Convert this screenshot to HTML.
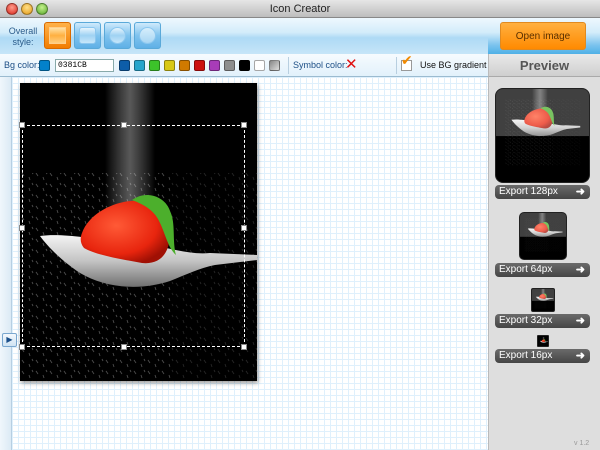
<!DOCTYPE html>
<html><head><meta charset="utf-8"><style>
*{margin:0;padding:0;box-sizing:border-box}
body{width:600px;height:450px;overflow:hidden;font-family:"Liberation Sans",sans-serif;background:#fff;position:relative}
.a{position:absolute}
#title{left:0;top:0;width:600px;height:18px;background:linear-gradient(#e6e6e6,#bdbdbd);border-bottom:1px solid #888;text-align:center;font-size:11px;line-height:18px;color:#222}
.tl{top:3px;width:12px;height:12px;border-radius:50%;border:1px solid rgba(0,0,0,.35)}
#tb{left:0;top:18px;width:600px;height:36px;background:linear-gradient(#eef8fe,#d3ecfa 40%,#aedaf5 55%,#c6e5f8)}
#tbr{left:488px;top:18px;width:112px;height:36px;background:linear-gradient(#eef8fe,#d3ecfa 40%,#7cc3ee 75%,#4fb0e6)}
.sb{top:22px;width:27px;height:27px;border-radius:3px;border:1px solid #5aa9d9;background:linear-gradient(#cfeafc,#7fc3ee 50%,#5fb0e6)}
.sb i{position:absolute;left:4px;top:4px;width:17px;height:17px;background:linear-gradient(#e7f5fd,#9fd2f3 50%,#c7e7fa);border:1px solid #8cc7ef}
#row{left:0;top:54px;width:488px;height:23px;background:linear-gradient(#f6fbfe,#e2f1fb);border-bottom:1px solid #9bbbd0;font-size:9px;color:#1d4f86}
.sw{top:6px;width:11px;height:11px;border-radius:2px;border:1px solid rgba(0,0,0,.35)}
#prevh{left:488px;top:54px;width:112px;height:23px;background:linear-gradient(#e9e9e9,#cfcfcf);border-bottom:1px solid #aaa;border-left:1px solid #bbb;text-align:center;font:bold 13px/23px "Liberation Sans",sans-serif;color:#555}
#grid{left:0;top:77px;width:488px;height:373px;background-color:#fff;background-image:linear-gradient(#dff0fc 1px,transparent 1px),linear-gradient(90deg,#dff0fc 1px,transparent 1px);background-size:6px 6px}
#rp{left:488px;top:77px;width:112px;height:373px;background:#dedede;border-left:1px solid #bbb}
.ex{left:495px;width:95px;height:14px;border-radius:4px;background:linear-gradient(#6a6a6a,#454545);color:#fff;font-size:10px;line-height:14px;padding-left:4px}
.ex b{position:absolute;right:5px;top:0;font-size:11px}
.pv{background:#000;border-radius:5px;overflow:hidden;border:1px solid #222}
.h{width:6px;height:6px;background:#fff;border:1px solid #888}
</style></head><body>
<svg width="0" height="0" style="position:absolute">
<defs>
<radialGradient id="sb" cx="40%" cy="40%" r="65%"><stop offset="0" stop-color="#ff5a36"/><stop offset=".7" stop-color="#e8250e"/><stop offset="1" stop-color="#a01004"/></radialGradient>
<linearGradient id="sp" x1="0" y1="0" x2="0" y2="1"><stop offset="0" stop-color="#f4f4f4"/><stop offset=".5" stop-color="#c4c4c4"/><stop offset="1" stop-color="#707070"/></linearGradient>
<linearGradient id="st" x1="0" y1="0" x2="1" y2="0"><stop offset="0" stop-color="#fff" stop-opacity="0"/><stop offset=".5" stop-color="#ddd" stop-opacity=".4"/><stop offset="1" stop-color="#fff" stop-opacity="0"/></linearGradient>
<pattern id="dots" width="14" height="11" patternUnits="userSpaceOnUse"><path d="M2 2l2 3M9 6l1 3M12 1l1 2" stroke="#ddd" stroke-width=".9"/></pattern>
<symbol id="photo" viewBox="0 0 237 298">
<rect width="237" height="298" fill="#000"/>
<rect x="85" y="0" width="50" height="160" fill="url(#st)"/>
<rect x="0" y="90" width="237" height="208" fill="url(#dots)" opacity=".35"/>
<rect x="150" y="90" width="87" height="208" fill="#000" opacity=".5"/>
<path d="M20 153 C40 150 70 155 90 158 L130 162 C150 165 170 172 190 170 L237 172 L237 177 L195 182 C180 185 165 192 150 198 C120 208 85 205 60 190 C42 178 28 164 20 153Z" fill="url(#sp)"/>
<path d="M62 150 C70 128 100 115 125 118 C140 122 150 132 150 150 C150 168 142 182 122 180 C100 176 76 172 64 165 C60 160 60 155 62 150Z" fill="url(#sb)"/>
<path d="M112 117 C128 106 146 115 150 128 C156 140 152 158 156 172 C148 165 145 150 140 140 C135 128 125 122 112 117Z" fill="#4caf2c"/>
</symbol>
</defs></svg>

<div id="title" class="a">Icon Creator</div>
<div class="a tl" style="left:6px;background:radial-gradient(circle at 50% 35%,#ff9c8c,#d8261a)"></div>
<div class="a tl" style="left:21px;background:radial-gradient(circle at 50% 35%,#ffe08a,#e59a14)"></div>
<div class="a tl" style="left:36px;background:radial-gradient(circle at 50% 35%,#c5f28c,#57a82a)"></div>

<div id="tb" class="a"></div>
<div id="tbr" class="a"></div>
<div class="a" style="left:6px;top:26px;width:34px;text-align:center;font-size:9px;line-height:11px;color:#2a5b8a">Overall style:</div>
<div class="a sb" style="left:44px;border-color:#d86a00;background:linear-gradient(#ffb24a,#f27d00)"><i style="background:linear-gradient(#ffe1a6,#ffb040 50%,#ffcf80);border-color:#ffcf8a"></i></div>
<div class="a sb" style="left:74px"><i style="border-radius:3px"></i></div>
<div class="a sb" style="left:104px"><i style="border-radius:50%"></i></div>
<div class="a sb" style="left:134px"><i style="border-radius:50%;background:linear-gradient(#d6eefc,#a8d6f3)"></i></div>
<div class="a" style="left:500px;top:22px;width:86px;height:28px;border-radius:3px;border:1px solid #e08a20;background:linear-gradient(#ffb040,#ff8a00);text-align:center;font-size:10px;line-height:27px;color:#5a3000">Open image</div>

<div id="row" class="a">
<span class="a" style="left:4px;top:6px">Bg color:</span>
<div class="a sw" style="left:39px;background:#0381cb"></div>
<div class="a" style="left:55px;top:5px;width:59px;height:13px;background:#fff;border:1px solid #8aa;font-size:8px;line-height:11px;padding-left:2px;color:#000;font-family:'Liberation Mono',monospace">0381CB</div>
<div class="a sw" style="left:119px;background:#0d5da8"></div>
<div class="a sw" style="left:134px;background:#27a5cc"></div>
<div class="a sw" style="left:149px;background:#3cc22a"></div>
<div class="a sw" style="left:164px;background:#d8c814"></div>
<div class="a sw" style="left:179px;background:#d07a00"></div>
<div class="a sw" style="left:194px;background:#cc1010"></div>
<div class="a sw" style="left:209px;background:#a83cb8"></div>
<div class="a sw" style="left:224px;background:#8e8e8e"></div>
<div class="a sw" style="left:239px;background:#000"></div>
<div class="a sw" style="left:254px;background:#fff"></div>
<div class="a sw" style="left:269px;background:linear-gradient(135deg,#888,#ddd)"></div>
<div class="a" style="left:288px;top:3px;width:1px;height:17px;background:#b8cfe0"></div>
<span class="a" style="left:293px;top:6px">Symbol color:</span>
<span class="a" style="left:345px;top:2px;font:bold 15px/16px 'DejaVu Sans',sans-serif;color:#e01010">✕</span>
<div class="a" style="left:396px;top:3px;width:1px;height:17px;background:#b8cfe0"></div>
<div class="a" style="left:401px;top:6px;width:11px;height:11px;background:#fff;border:1px solid #999"></div>
<span class="a" style="left:401px;top:-1px;font:bold 14px/16px 'DejaVu Sans',sans-serif;color:#f28a00">✔</span>
<span class="a" style="left:420px;top:6px;color:#111">Use BG gradient</span>
</div>
<div id="prevh" class="a">Preview</div>

<div id="grid" class="a"></div>
<div class="a" style="left:0;top:77px;width:12px;height:373px;background:linear-gradient(90deg,#f0f7fc,#dbeaf5);border-right:1px solid #b7cfe2"></div>
<div class="a" style="left:2px;top:333px;width:15px;height:14px;border-radius:2px;border:1px solid #7aa7cf;background:linear-gradient(#f4f9fd,#cfe3f3);font-size:8px;line-height:12px;text-align:center;color:#1a4f8a">▶</div>

<svg class="a" style="left:20px;top:83px;box-shadow:1px 2px 4px rgba(0,0,0,.4)" width="237" height="298"><use href="#photo"/></svg>
<div class="a" style="left:22px;top:125px;width:223px;height:222px;border:1px dashed #fff"></div>
<div class="a h" style="left:19px;top:122px"></div><div class="a h" style="left:121px;top:122px"></div><div class="a h" style="left:241px;top:122px"></div>
<div class="a h" style="left:19px;top:225px"></div><div class="a h" style="left:241px;top:225px"></div>
<div class="a h" style="left:19px;top:344px"></div><div class="a h" style="left:121px;top:344px"></div><div class="a h" style="left:241px;top:344px"></div>

<div id="rp" class="a"></div>
<div class="a pv" style="left:495px;top:88px;width:95px;height:95px;border-radius:8px"><svg width="95" height="95" viewBox="2 42 223 222" preserveAspectRatio="none"><use href="#photo"/><rect x="2" y="42" width="223" height="110" fill="#fff" opacity=".25"/></svg></div>
<div class="a ex" style="top:185px">Export 128px<b>➜</b></div>
<div class="a pv" style="left:519px;top:212px;width:48px;height:48px"><svg width="48" height="48" viewBox="2 42 223 222" preserveAspectRatio="none"><use href="#photo"/><rect x="2" y="42" width="223" height="110" fill="#fff" opacity=".25"/></svg></div>
<div class="a ex" style="top:263px">Export 64px<b>➜</b></div>
<div class="a pv" style="left:531px;top:288px;width:24px;height:24px;border-radius:2px"><svg width="24" height="24" viewBox="2 42 223 222" preserveAspectRatio="none"><use href="#photo"/><rect x="2" y="42" width="223" height="110" fill="#fff" opacity=".25"/></svg></div>
<div class="a ex" style="top:314px">Export 32px<b>➜</b></div>
<div class="a pv" style="left:537px;top:335px;width:12px;height:12px;border-radius:1px"><svg width="12" height="12" viewBox="2 42 223 222" preserveAspectRatio="none"><use href="#photo"/></svg></div>
<div class="a ex" style="top:349px">Export 16px<b>➜</b></div>
<div class="a" style="left:574px;top:440px;font-size:7px;color:#999">v 1.2</div>
</body></html>
